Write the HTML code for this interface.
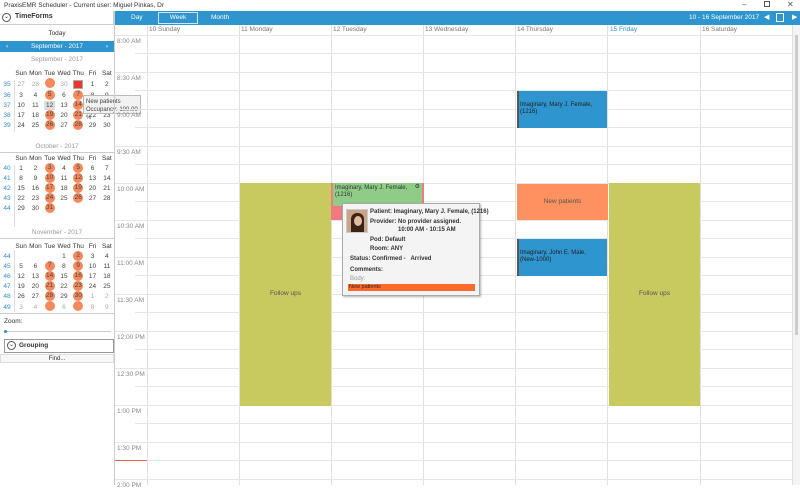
<!DOCTYPE html>
<html><head><meta charset="utf-8">
<style>
*{box-sizing:border-box;margin:0;padding:0}
body{width:800px;height:485px;overflow:hidden;background:#fff;font-family:"Liberation Sans",sans-serif;color:#333;position:relative;font-size:7px}
.a{position:absolute}
.cal{position:absolute;left:0;width:114px}
.cal table{border-collapse:collapse;position:absolute;left:0}
.cal td{width:14.3px;height:10px;text-align:center;font-size:6.5px;color:#444;padding:0;position:relative}
.cal td.w{width:14px;color:#2e8fce;}
.cal td.g{color:#aaa}
.cal td.h{font-size:6.5px;color:#333}
.c{display:inline-block;width:10px;height:10px;line-height:10px;border-radius:50%;background:#f5895c;color:#444}
.ln{position:absolute;left:147px;right:8px;height:1px;background:#e6e6e6}
.tl{position:absolute;left:117px;font-size:6.5px;color:#888;width:28px}
.vl{position:absolute;top:25px;bottom:0;width:1px;background:#e0e0e0}
.dh{position:absolute;top:26px;font-size:6.5px;color:#777}
</style></head><body>
<!-- title -->
<div class="a" style="left:4px;top:2px;font-size:6.5px;color:#333">PraxisEMR Scheduler - Current user: Miguel Pinkas, Dr</div>
<div class="a" style="left:742px;top:0;font-size:8px;color:#555">–</div>
<div class="a" style="left:764px;top:1px;width:6px;height:6px;border:1px solid #555"></div>
<div class="a" style="left:787px;top:0;font-size:8px;color:#555">✕</div>
<!-- left panel -->
<div class="a" style="left:0;top:11px;width:114px;height:14px;border-bottom:1px solid #ccc;border-right:1px solid #ccc"></div>
<div class="a" style="left:2px;top:13px;width:9px;height:9px;border:1px solid #555;border-radius:50%;font-size:6px;line-height:7px;text-align:center">⌄</div>
<div class="a" style="left:15px;top:13px;font-size:7px;font-weight:bold">TimeForms</div>
<div class="a" style="left:0;top:30px;width:114px;text-align:center;font-size:6.5px">Today</div>
<div class="a" style="left:0;top:41px;width:114px;height:11px;background:#2e95cf;color:#fff;font-size:6.5px;text-align:center;line-height:11px">September - 2017<span style="position:absolute;left:6px">‹</span><span style="position:absolute;right:6px">›</span></div>
<div class="a" style="left:0;top:56px;width:114px;text-align:center;font-size:6.5px;color:#999">September - 2017</div>
<div class="a" style="left:14px;top:80px;width:1px;height:52px;background:#ddd"></div>
<div class="cal" style="top:68px"><table>
<tr><td class="w"></td><td class="h">Sun</td><td class="h">Mon</td><td class="h">Tue</td><td class="h">Wed</td><td class="h">Thu</td><td class="h">Fri</td><td class="h">Sat</td></tr>
<tr><td class="w">35</td><td class="g">27</td><td class="g">28</td><td><span class="c"></span></td><td class="g">30</td><td><span style="display:inline-block;width:10px;height:9px;background:#e8382e;border:1px solid #aaa;color:#e8382e;line-height:8px">31</span></td><td>1</td><td>2</td></tr>
<tr><td class="w">36</td><td>3</td><td>4</td><td><span class="c">5</span></td><td>6</td><td><span class="c">7</span></td><td>8</td><td>9</td></tr>
<tr><td class="w">37</td><td>10</td><td>11</td><td><span style="display:inline-block;width:11px;height:9px;background:#ddd;line-height:9px">12</span></td><td>13</td><td><span class="c">14</span></td><td>15</td><td>16</td></tr>
<tr><td class="w">38</td><td>17</td><td>18</td><td><span class="c">19</span></td><td>20</td><td><span class="c">21</span></td><td>22</td><td>23</td></tr>
<tr><td class="w">39</td><td>24</td><td>25</td><td><span class="c">26</span></td><td>27</td><td><span class="c">28</span></td><td>29</td><td>30</td></tr>
</table></div>
<div class="a" style="left:83px;top:95px;width:58px;height:19px;background:#f2f2f2;border:1px solid #bbb;font-size:6px;color:#444;padding:2px 2px;line-height:8px">New patients<br>Occupancy: 100.00 %</div>
<div class="a" style="left:0;top:152px;width:114px;height:1px;background:#ccc"></div>
<div class="a" style="left:0;top:143px;width:114px;text-align:center;font-size:6.5px;color:#999">October - 2017</div>
<div class="a" style="left:14px;top:165px;width:1px;height:62px;background:#ddd"></div>
<div class="cal" style="top:153px"><table>
<tr><td class="w"></td><td class="h">Sun</td><td class="h">Mon</td><td class="h">Tue</td><td class="h">Wed</td><td class="h">Thu</td><td class="h">Fri</td><td class="h">Sat</td></tr>
<tr><td class="w">40</td><td>1</td><td>2</td><td><span class="c">3</span></td><td>4</td><td><span class="c">5</span></td><td>6</td><td>7</td></tr>
<tr><td class="w">41</td><td>8</td><td>9</td><td><span class="c">10</span></td><td>11</td><td><span class="c">12</span></td><td>13</td><td>14</td></tr>
<tr><td class="w">42</td><td>15</td><td>16</td><td><span class="c">17</span></td><td>18</td><td><span class="c">19</span></td><td>20</td><td>21</td></tr>
<tr><td class="w">43</td><td>22</td><td>23</td><td><span class="c">24</span></td><td>25</td><td><span class="c">26</span></td><td>27</td><td>28</td></tr>
<tr><td class="w">44</td><td>29</td><td>30</td><td><span class="c">31</span></td><td></td><td></td><td></td><td></td></tr>
</table></div>
<div class="a" style="left:0;top:238px;width:114px;height:1px;background:#ccc"></div>
<div class="a" style="left:0;top:229px;width:114px;text-align:center;font-size:6.5px;color:#999">November - 2017</div>
<div class="a" style="left:14px;top:250px;width:1px;height:62px;background:#ddd"></div>
<div class="cal" style="top:241px"><table>
<tr><td class="w"></td><td class="h">Sun</td><td class="h">Mon</td><td class="h">Tue</td><td class="h">Wed</td><td class="h">Thu</td><td class="h">Fri</td><td class="h">Sat</td></tr>
<tr><td class="w">44</td><td></td><td></td><td></td><td>1</td><td><span class="c">2</span></td><td>3</td><td>4</td></tr>
<tr><td class="w">45</td><td>5</td><td>6</td><td><span class="c">7</span></td><td>8</td><td><span class="c">9</span></td><td>10</td><td>11</td></tr>
<tr><td class="w">46</td><td>12</td><td>13</td><td><span class="c">14</span></td><td>15</td><td><span class="c">16</span></td><td>17</td><td>18</td></tr>
<tr><td class="w">47</td><td>19</td><td>20</td><td><span class="c">21</span></td><td>22</td><td><span class="c">23</span></td><td>24</td><td>25</td></tr>
<tr><td class="w">48</td><td>26</td><td>27</td><td><span class="c">28</span></td><td>29</td><td><span class="c">30</span></td><td class="g">1</td><td class="g">2</td></tr>
<tr><td class="w">49</td><td class="g">3</td><td class="g">4</td><td><span class="c"></span></td><td class="g">6</td><td><span class="c"></span></td><td class="g">8</td><td class="g">9</td></tr>
</table></div>
<div class="a" style="left:0;top:313px;width:114px;height:1px;background:#ccc"></div>
<div class="a" style="left:4px;top:318px;font-size:6.5px">Zoom:</div>
<div class="a" style="left:5px;top:331px;width:106px;height:1px;background:#ccc"></div>
<div class="a" style="left:4px;top:330px;width:3px;height:3px;border-radius:50%;background:#2e8fce"></div>
<div class="a" style="left:4px;top:339px;width:110px;height:14px;border:1px solid #999"></div>
<div class="a" style="left:7px;top:341px;width:9px;height:9px;border:1px solid #555;border-radius:50%;font-size:6px;line-height:7px;text-align:center">⌄</div>
<div class="a" style="left:19px;top:342px;font-size:6.5px;font-weight:bold">Grouping</div>
<div class="a" style="left:0;top:354px;width:114px;height:9px;border:1px solid #ddd;background:#f8f8f8;text-align:center;font-size:6px;line-height:8px">Find...</div>
<div class="a" style="left:114px;top:11px;width:1px;height:474px;background:#ccc"></div>
<!-- toolbar -->
<div class="a" style="left:115px;top:11px;width:685px;height:14px;background:#2e95cf"></div>
<div class="a" style="left:131px;top:14px;color:#fff;font-size:6.5px">Day</div>
<div class="a" style="left:158px;top:12px;width:40px;height:12px;border:1px solid #cfe6f5;color:#fff;font-size:6.5px;text-align:center;line-height:10px">Week</div>
<div class="a" style="left:211px;top:14px;color:#fff;font-size:6.5px">Month</div>
<div class="a" style="left:689px;top:14px;color:#fff;font-size:6.5px">10 - 16 September 2017</div>
<div class="a" style="left:764px;top:13px;color:#fff;font-size:7px">◀</div>
<div class="a" style="left:776px;top:13px;width:8px;height:9px;border:1px solid #fff"></div>
<div class="a" style="left:792px;top:13px;color:#fff;font-size:7px">▶</div>
<!-- grid -->
<div class="vl" style="left:147px"></div><div class="vl" style="left:239px"></div><div class="vl" style="left:331px"></div><div class="vl" style="left:423px"></div><div class="vl" style="left:515px"></div><div class="vl" style="left:607px"></div><div class="vl" style="left:700px"></div><div class="vl" style="left:792px"></div>
<div class="a" style="left:793px;top:25px;width:7px;height:460px;background:#f4f4f4"></div>
<div class="a" style="left:795px;top:35px;width:3px;height:300px;background:#ccc"></div>
<div class="dh" style="left:149px">10 Sunday</div><div class="dh" style="left:241px">11 Monday</div><div class="dh" style="left:333px">12 Tuesday</div><div class="dh" style="left:425px">13 Wednesday</div><div class="dh" style="left:517px">14 Thursday</div><div class="dh" style="left:610px;color:#2e8fce">15 Friday</div><div class="dh" style="left:702px">16 Saturday</div>
<div class="ln" style="top:35px;left:115px"></div>
<div class="ln" style="top:53px;left:135px"></div><div class="ln" style="top:72px;left:115px"></div><div class="ln" style="top:90px;left:135px"></div><div class="ln" style="top:109px;left:115px"></div><div class="ln" style="top:127px;left:135px"></div><div class="ln" style="top:146px;left:115px"></div><div class="ln" style="top:164px;left:135px"></div><div class="ln" style="top:183px;left:115px"></div><div class="ln" style="top:201px;left:135px"></div><div class="ln" style="top:220px;left:115px"></div><div class="ln" style="top:238px;left:135px"></div><div class="ln" style="top:257px;left:115px"></div><div class="ln" style="top:275px;left:135px"></div><div class="ln" style="top:294px;left:115px"></div><div class="ln" style="top:312px;left:135px"></div><div class="ln" style="top:331px;left:115px"></div><div class="ln" style="top:349px;left:135px"></div><div class="ln" style="top:368px;left:115px"></div><div class="ln" style="top:386px;left:135px"></div><div class="ln" style="top:405px;left:115px"></div><div class="ln" style="top:423px;left:135px"></div><div class="ln" style="top:442px;left:115px"></div><div class="ln" style="top:460px;left:135px"></div><div class="ln" style="top:479px;left:115px"></div>
<div class="tl" style="top:38px">8:00 AM</div><div class="tl" style="top:75px">8:30 AM</div><div class="tl" style="top:112px">9:00 AM</div><div class="tl" style="top:149px">9:30 AM</div><div class="tl" style="top:186px">10:00 AM</div><div class="tl" style="top:223px">10:30 AM</div><div class="tl" style="top:260px">11:00 AM</div><div class="tl" style="top:297px">11:30 AM</div><div class="tl" style="top:334px">12:00 PM</div><div class="tl" style="top:371px">12:30 PM</div><div class="tl" style="top:408px">1:00 PM</div><div class="tl" style="top:445px">1:30 PM</div><div class="tl" style="top:482px">2:00 PM</div>
<div class="a" style="left:115px;top:460px;width:32px;height:1px;background:#f06060"></div>
<!-- events -->
<div class="a" style="left:240px;top:183px;width:91px;height:223px;background:#c8c95f;color:#555;font-size:6.5px;text-align:center;padding-top:107px">Follow ups</div>
<div class="a" style="left:609px;top:183px;width:91px;height:223px;background:#c8c95f;color:#555;font-size:6.5px;text-align:center;padding-top:107px">Follow ups</div>
<div class="a" style="left:331px;top:183px;width:93px;height:37px;background:#f07a80"></div>
<div class="a" style="left:333px;top:183px;width:89px;height:23px;background:#8fcc88;font-size:6px;color:#333;padding:2px;line-height:7px">Imaginary, Mary J. Female,<br>(1216)<span style="position:absolute;right:2px;top:1px">⚙</span></div>
<div class="a" style="left:517px;top:91px;width:90px;height:37px;background:#2e95cf;border-left:2px solid #555;font-size:6px;color:#222;padding:11px 1px;line-height:7px">Imaginary, Mary J. Female,<br>(1216)</div>
<div class="a" style="left:517px;top:184px;width:91px;height:36px;background:#fd9160;font-size:6.5px;color:#555;text-align:center;line-height:36px">New patients</div>
<div class="a" style="left:517px;top:239px;width:90px;height:37px;background:#2e95cf;border-left:2px solid #555;font-size:6px;color:#222;padding:11px 1px;line-height:7px">Imaginary, John E. Male,<br>(New-1000)</div>
<!-- tooltip -->
<div class="a" style="left:342px;top:203px;width:138px;height:93px;background:#f4f4f4;border:1px solid #aaa;box-shadow:1px 1px 2px rgba(0,0,0,.3)"></div>
<div class="a" style="left:346px;top:209px;width:22px;height:24px;background:#c9a488;border:1px solid #ccc;overflow:hidden"><div style="position:absolute;left:4px;top:3px;width:13px;height:22px;border-radius:6px 6px 0 0;background:#3a2418"></div><div style="position:absolute;left:7px;top:6px;width:8px;height:10px;border-radius:50%;background:#e2bca0"></div></div>
<div class="a" style="left:370px;top:207px;font-size:6px;font-weight:bold;line-height:10px;color:#333">Patient: Imaginary, Mary J. Female, (1216)<br>Provider: No provider assigned.</div>
<div class="a" style="left:398px;top:227px;font-size:6px;font-weight:bold;color:#333">10:00 AM - 10:15 AM</div>
<div class="a" style="left:370px;top:236px;font-size:6px;font-weight:bold;line-height:9px;color:#333">Pod: Default<br>Room: ANY</div>
<div class="a" style="left:350px;top:256px;font-size:6px;font-weight:bold;color:#333">Status: Confirmed -&nbsp;&nbsp; Arrived</div>
<div class="a" style="left:350px;top:267px;font-size:6px;font-weight:bold;color:#333">Comments:</div>
<div class="a" style="left:350px;top:276px;font-size:6px;color:#999">Body:</div>
<div class="a" style="left:348px;top:284px;width:127px;height:7px;background:#ff6a2a;font-size:5.5px;color:#222;line-height:7px;padding-left:1px">New patients</div>
</body></html>
